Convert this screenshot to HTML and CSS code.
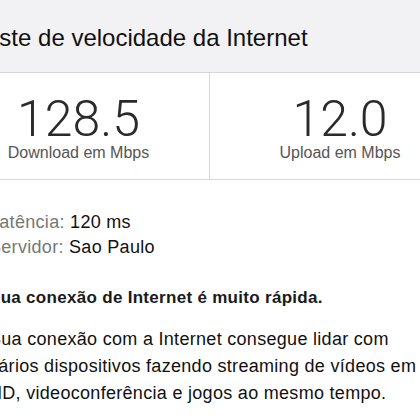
FILE: index.html
```html
<!DOCTYPE html>
<html lang="pt">
<head>
    <meta charset="UTF-8">
    <title>Teste de velocidade</title>
    <link rel="stylesheet" href="styles.css">
</head>
<body>
    <div class="page">
        <div class="header">Teste de velocidade da Internet</div>
        <div class="stats">
            <div class="stat">
                <div class="value">128.5</div>
                <div class="unit">Download em Mbps</div>
            </div>
            <div class="stat">
                <div class="value">12.0</div>
                <div class="unit">Upload em Mbps</div>
            </div>
        </div>
        <div class="content">
            <div class="info">
                <div><span class="key">Latência:</span> 120 ms</div>
                <div><span class="key">Servidor:</span> Sao Paulo</div>
            </div>
            <p class="verdict">Sua conexão de Internet é muito rápida.</p>
            <p class="desc">Sua conexão com a Internet consegue lidar com vários dispositivos fazendo streaming de vídeos em HD, videoconferência e jogos ao mesmo tempo.</p>
        </div>
    </div>
</body>
</html>
```

FILE: styles.css
```css
body{
    margin: 0;
    overflow: hidden;
    background: #fff;
    font-family: "Liberation Sans", Arial, sans-serif;
    color: #111;
}
.page{
    margin-left: -52px;
    width: 522px;
}
.header{
    height: 73px;
    background: #f2f2f4;
    border-bottom: 1px solid #d6d6d8;
    display: flex;
    align-items: center;
    padding: 4px 0 0 26px;
    font-size: 24px;
    box-sizing: border-box;
}
.stats{
    display: grid;
    grid-template-columns: 261px 261px;
    border-bottom: 1px solid #d6d6d8;
}
.stat{
    height: 106px;
    display: flex;
    flex-direction: column;
    align-items: center;
    padding-top: 24px;
    box-sizing: border-box;
}
.stat + .stat{
    border-left: 1px solid #d6d6d8;
}
.value{
    font-family: Roboto, "Liberation Sans", sans-serif;
    font-weight: 300;
    font-size: 50px;
    line-height: 44px;
    color: #2a2a2a;
}
.unit{
    font-size: 16px;
    line-height: 18px;
    margin-top: 3px;
    color: #555;
}
.content{
    padding: 30px 0 0 41px;
    font-size: 18px;
    letter-spacing: 0.3px;
}
.info{
    line-height: 25px;
}
.key{
    color: #777;
}
.verdict{
    margin: 28px 0 0;
    font-size: 17px;
    font-weight: bold;
    color: #1a1a1a;
}
.desc{
    margin: 18px 0 0;
    line-height: 27px;
    width: 432px;
}
```
